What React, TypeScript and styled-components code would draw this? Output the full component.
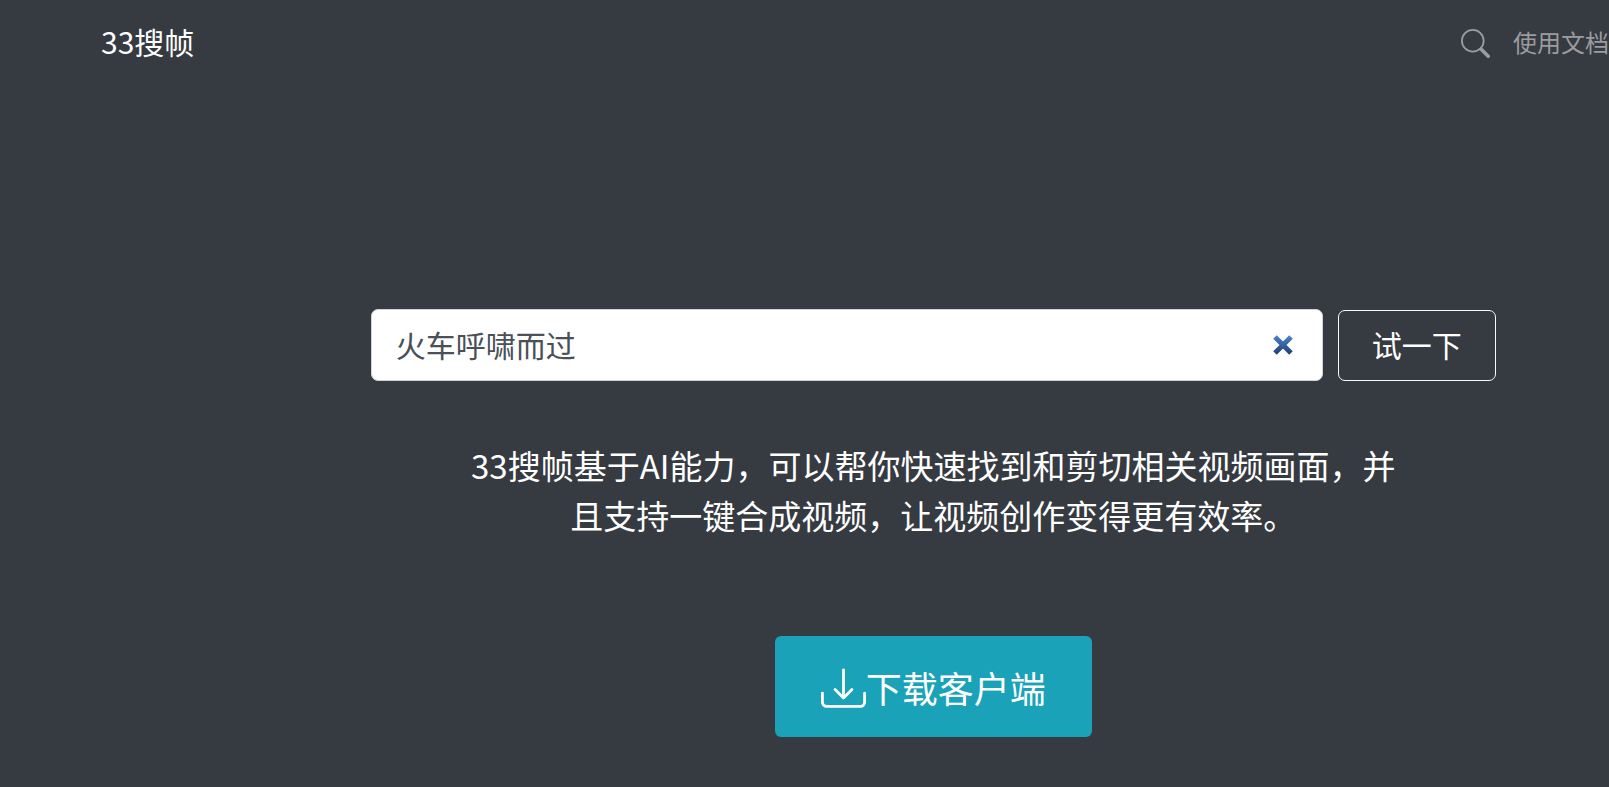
import React, { useState } from "react";
import styled, { createGlobalStyle } from "styled-components";

const GlobalStyle = createGlobalStyle`
  *, *::before, *::after { box-sizing: border-box; }
  body {
    margin: 0;
    background: #363a41;
    color: #fff;
    font-family: "Noto Sans CJK SC", "Noto Sans", sans-serif;
  }
  button, input { font: inherit; }
`;

const Page = styled.div`
  min-height: 100vh;
  overflow: hidden;
`;

const Header = styled.header`
  display: flex;
  align-items: center;
  justify-content: space-between;
  height: 86px;
  padding-left: 101px;
`;

const Brand = styled.a`
  padding-bottom: 4px;
  font-size: 30px;
  line-height: 44px;
  color: #fff;
  text-decoration: none;
`;

const Nav = styled.nav`
  display: flex;
  align-items: center;
  gap: 23px;
`;

const NavLink = styled.a`
  display: flex;
  font-size: 24px;
  line-height: 36px;
  color: #9a9c9f;
  text-decoration: none;
  white-space: nowrap;
`;

const TextLink = styled(NavLink)`
  padding-bottom: 2px;
`;

const Hero = styled.main`
  display: flex;
  flex-direction: column;
  align-items: center;
  width: 116%;
  padding-top: 223px;
`;

const SearchForm = styled.form`
  display: flex;
  align-items: flex-end;
  gap: 15px;
  width: 80%;
  max-width: 1125px;
`;

const SearchField = styled.div`
  display: flex;
  align-items: center;
  flex: 1;
  height: 72px;
  padding: 0 24px;
  border: 1px solid #ced4da;
  border-radius: 7px;
  background: #fff;
`;

const SearchInput = styled.input`
  flex: 1;
  min-width: 0;
  padding: 0 0 2px;
  border: 0;
  outline: 0;
  background: transparent;
  color: #495057;
  font-size: 30px;
  line-height: 45px;
`;

const ClearButton = styled.button`
  display: flex;
  padding: 3px;
  border: 0;
  background: transparent;
`;

const TryButton = styled.button`
  height: 71px;
  padding: 0 33px 2px;
  border: 1px solid #f8f9fa;
  border-radius: 7px;
  background: transparent;
  color: #fff;
  font-size: 30px;
  line-height: 45px;
`;

const Intro = styled.p`
  width: 50%;
  margin: 59px 0 0;
  font-size: 33px;
  line-height: 50px;
  text-align: center;
`;

const DownloadButton = styled.button`
  display: flex;
  align-items: center;
  height: 101px;
  margin: 96px 0 48px;
  padding: 0 46px;
  border: 0;
  border-radius: 6px;
  background: #19a2b8;
  color: #fff;
  font-size: 36px;
  line-height: 54px;

  svg {
    margin-top: 5px;
  }
`;

const SearchIcon = () => (
  <svg width="29" height="29" viewBox="0 0 16 16" fill="currentColor" aria-hidden="true">
    <path d="M10.442 10.442a1 1 0 0 1 1.415 0l3.85 3.85a1 1 0 0 1-1.414 1.415l-3.85-3.85a1 1 0 0 1 0-1.415z" />
    <path fillRule="evenodd" d="M6.5 12a5.5 5.5 0 1 0 0-11 5.5 5.5 0 0 0 0 11zM13 6.5a6.5 6.5 0 1 1-13 0 6.5 6.5 0 0 1 13 0z" />
  </svg>
);

const ClearIcon = () => (
  <svg width="24" height="24" viewBox="0 0 24 24" aria-hidden="true">
    <defs>
      <linearGradient id="clear" gradientUnits="userSpaceOnUse" x1="0" y1="2" x2="0" y2="22">
        <stop offset="0" stopColor="#4a86d0" />
        <stop offset="1" stopColor="#213a6e" />
      </linearGradient>
    </defs>
    <path d="M4 4 20 20M20 4 4 20" stroke="url(#clear)" strokeWidth="5" />
  </svg>
);

const DownloadIcon = () => (
  <svg width="45" height="45" viewBox="0 0 16 16" fill="none" stroke="currentColor" strokeLinecap="round" aria-hidden="true">
    <path d="M.5 9.3V12.5A1.5 1.5 0 0 0 2 14H14a1.5 1.5 0 0 0 1.5-1.5V9.3" />
    <path d="M8 1v10M5 8 8 11 11 8" strokeLinejoin="round" />
  </svg>
);

export default function App() {
  const [query, setQuery] = useState("火车呼啸而过");
  return (
    <Page lang="zh-CN">
      <GlobalStyle />
      <Header>
        <Brand href="#">33搜帧</Brand>
        <Nav>
          <NavLink href="#search" aria-label="搜索"><SearchIcon /></NavLink>
          <TextLink href="#docs">使用文档</TextLink>
        </Nav>
      </Header>
      <Hero>
        <SearchForm onSubmit={(e) => e.preventDefault()}>
          <SearchField>
            <SearchInput aria-label="搜索画面" value={query} onChange={(e) => setQuery(e.target.value)} />
            <ClearButton type="button" aria-label="清除" onClick={() => setQuery("")}>
              <ClearIcon />
            </ClearButton>
          </SearchField>
          <TryButton type="submit">试一下</TryButton>
        </SearchForm>
        <Intro>33搜帧基于AI能力，可以帮你快速找到和剪切相关视频画面，并且支持一键合成视频，让视频创作变得更有效率。</Intro>
        <DownloadButton type="button">
          <DownloadIcon />
          下载客户端
        </DownloadButton>
      </Hero>
    </Page>
  );
}
